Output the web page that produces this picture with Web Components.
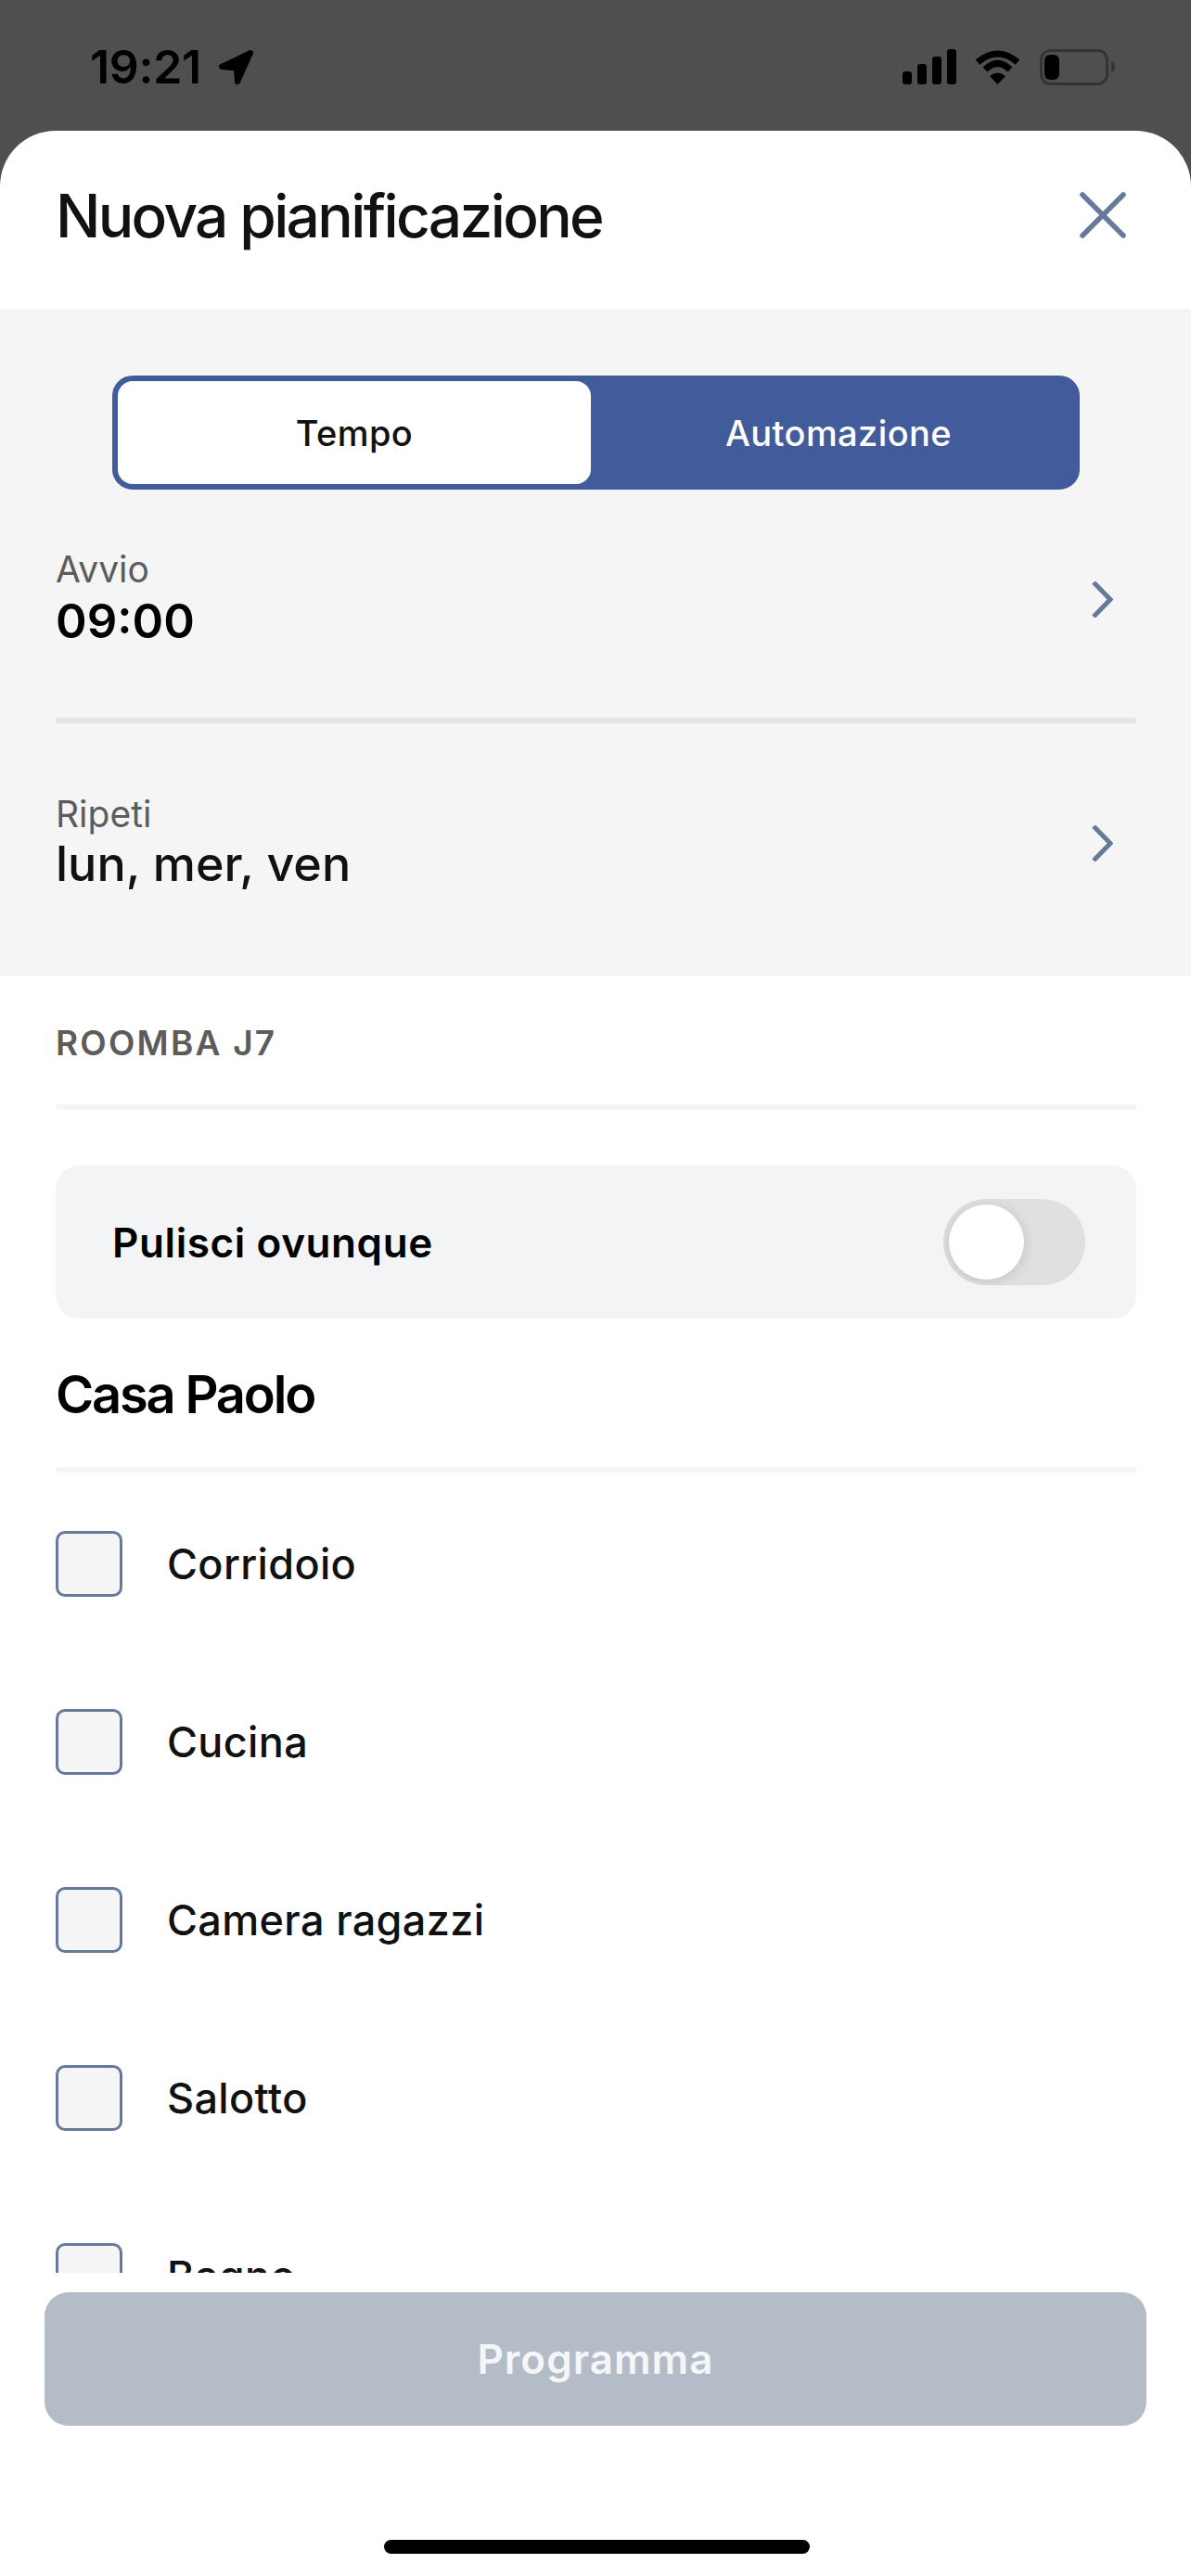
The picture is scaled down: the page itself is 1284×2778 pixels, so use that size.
<!DOCTYPE html>
<html lang="it">
<head>
<meta charset="utf-8">
<title>Nuova pianificazione</title>
<style>
	html, body {
		margin: 0;
		background: #4f4f50;
	}

	body {
		width: 1284px;
		height: 2778px;
		overflow: hidden;
		font-family: Inter, "Liberation Sans", sans-serif;
		color: #111111;
	}
</style>
</head>
<body>
	<app-status-bar time="19:21"></app-status-bar>
	<schedule-sheet>
		<sheet-header slot="header">Nuova pianificazione</sheet-header>

		<segmented-control slot="when" active="Tempo" other="Automazione"></segmented-control>
		<setting-row slot="when" label="Avvio" value="09:00" variant="time"></setting-row>
		<sheet-divider slot="when" tone="dark"></sheet-divider>
		<setting-row slot="when" label="Ripeti" value="lun, mer, ven" variant="days"></setting-row>

		<section-label slot="what">ROOMBA J7</section-label>
		<sheet-divider slot="what" style="margin-top: 46px"></sheet-divider>
		<toggle-card slot="what" style="margin-top: 60px">Pulisci ovunque</toggle-card>
		<map-title slot="what">Casa Paolo</map-title>
		<sheet-divider slot="what" style="margin-top: 46px"></sheet-divider>

		<room-row slot="rooms">Corridoio</room-row>
		<room-row slot="rooms">Cucina</room-row>
		<room-row slot="rooms">Camera ragazzi</room-row>
		<room-row slot="rooms">Salotto</room-row>
		<room-row slot="rooms">Bagno</room-row>

		<primary-button slot="footer" disabled>Programma</primary-button>
		<home-indicator slot="footer"></home-indicator>
	</schedule-sheet>

<script>
class AppStatusBar extends HTMLElement {
	constructor() {
		super();
		this.attachShadow({ mode: 'open' });
		this.shadowRoot.innerHTML = `
			<style>
				:host {
					display: flex;
					justify-content: space-between;
					box-sizing: border-box;
					height: 141px;
					padding: 53px 82px 0 97px;
					background: #4f4f50;
					color: #000000;
				}

				.left, .right {
					display: flex;
					align-items: flex-start;
				}

				.time {
					width: 120px;
					font-size: 50px;
					font-weight: 600;
					line-height: 39px;
					letter-spacing: -0.3px;
					white-space: nowrap;
				}

				svg {
					display: block;
				}
			</style>
			<div class="left">
				<span class="time"></span>
				<svg style="margin-left: 18px" width="39" height="39" viewBox="0 0 39 39" aria-hidden="true">
					<path d="M35 4 L4 19 L20 20.5 L21 35 Z" fill="#000" stroke="#000" stroke-width="6" stroke-linejoin="round"/>
				</svg>
			</div>
			<div class="right">
				<svg width="58" height="38" viewBox="0 0 58 38" aria-hidden="true">
					<rect x="0" y="24" width="10" height="14" rx="3"/>
					<rect x="16" y="16" width="10" height="22" rx="3"/>
					<rect x="32" y="8" width="10" height="30" rx="3"/>
					<rect x="48" y="0" width="10" height="38" rx="3"/>
				</svg>
				<svg style="margin: 1px 0 0 20px" width="49" height="37" viewBox="0 0 49 37" aria-hidden="true">
					<path d="M3 13 Q24.5 -5 46 13" fill="none" stroke="#000" stroke-width="7"/>
					<path d="M11 21 Q24.5 8 38 21" fill="none" stroke="#000" stroke-width="7"/>
					<path d="M16 28 Q24.5 21 33 28 L24.5 37 Z"/>
				</svg>
				<svg style="margin-left: 21px" width="81" height="39" viewBox="0 0 81 39" aria-hidden="true">
					<rect x="1.5" y="1.5" width="71" height="36" rx="10" fill="none" stroke="#343434" stroke-width="3"/>
					<rect x="5" y="6" width="16" height="27" rx="6"/>
					<path d="M77 13 Q81 15 81 19 Q81 23 77 25 Z" fill="#343434"/>
				</svg>
			</div>
		`;
		this.shadowRoot.querySelector('.time').textContent = this.getAttribute('time');
	}
}

class ScheduleSheet extends HTMLElement {
	constructor() {
		super();
		this.attachShadow({ mode: 'open' });
		this.shadowRoot.innerHTML = `
			<style>
				:host {
					display: block;
					height: 2637px;
					background: #ffffff;
					border-radius: 60px 60px 0 0;
					overflow: hidden;
				}

				.when {
					display: block;
					padding: 72px 59px 0 60px;
					height: 719px;
					box-sizing: border-box;
					background: #f5f5f5;
				}

				.what {
					padding: 0 59px 0 60px;
				}

				.rooms {
					height: 861px;
					margin-top: 2px;
					padding: 0 59px 0 60px;
					overflow: hidden;
				}
			</style>
			<slot name="header"></slot>
			<div class="when"><slot name="when"></slot></div>
			<div class="what"><slot name="what"></slot></div>
			<div class="rooms"><slot name="rooms"></slot></div>
			<slot name="footer"></slot>
		`;
	}
}

class SheetHeader extends HTMLElement {
	constructor() {
		super();
		this.attachShadow({ mode: 'open' });
		this.shadowRoot.innerHTML = `
			<style>
				:host {
					display: flex;
					align-items: center;
					justify-content: space-between;
					box-sizing: border-box;
					height: 192px;
					padding: 0 70px 10px 60px;
				}

				.title {
					font-size: 64px;
					font-weight: 500;
					letter-spacing: -2.65px;
					color: #111111;
				}

				svg {
					display: block;
				}
			</style>
			<span class="title"><slot></slot></span>
			<svg width="50" height="50" viewBox="0 0 50 50" aria-label="Chiudi">
				<path d="M3 3 L47 47 M47 3 L3 47" fill="none" stroke="#65799a" stroke-width="5.5" stroke-linecap="round"/>
			</svg>
		`;
	}
}

class SegmentedControl extends HTMLElement {
	constructor() {
		super();
		this.attachShadow({ mode: 'open' });
		this.shadowRoot.innerHTML = `
			<style>
				:host {
					display: grid;
					grid-template-columns: 510px 1fr;
					box-sizing: border-box;
					height: 123px;
					margin: 0 61px;
					border: 6px solid #425c9b;
					background: #425c9b;
					border-radius: 22px;
					font-size: 38px;
					font-weight: 500;
					letter-spacing: 0.4px;
				}

				div {
					display: flex;
					align-items: center;
					justify-content: center;
				}

				.active {
					background: #ffffff;
					border-radius: 16px;
					color: #111111;
				}

				.other {
					padding-left: 13px;
					color: #ffffff;
				}
			</style>
			<div class="active"></div>
			<div class="other"></div>
		`;
		this.shadowRoot.querySelector('.active').textContent = this.getAttribute('active');
		this.shadowRoot.querySelector('.other').textContent = this.getAttribute('other');
	}
}

class SettingRow extends HTMLElement {
	constructor() {
		super();
		this.attachShadow({ mode: 'open' });
		this.shadowRoot.innerHTML = `
			<style>
				:host {
					display: flex;
					align-items: center;
					justify-content: space-between;
					box-sizing: border-box;
					padding: 62px 25px 72px 0;
				}

				:host([variant="days"]) {
					padding-top: 74px;
					padding-bottom: 88px;
				}

				.label {
					font-size: 39px;
					line-height: 48px;
					color: #5c5c5c;
				}

				.value {
					font-size: 51px;
					line-height: 64px;
					font-weight: 600;
					color: #000000;
				}

				:host([variant="days"]) .value {
					margin-top: -2px;
					font-size: 52px;
					font-weight: 500;
					color: #111111;
				}

				svg {
					display: block;
				}
			</style>
			<div>
				<div class="label"></div>
				<div class="value"></div>
			</div>
			<svg width="23" height="39" viewBox="0 0 23 39" aria-hidden="true">
				<path d="M2 1 L20 19.5 L2 38" fill="none" stroke="#65799a" stroke-width="5"/>
			</svg>
		`;
		this.shadowRoot.querySelector('.label').textContent = this.getAttribute('label');
		this.shadowRoot.querySelector('.value').textContent = this.getAttribute('value');
	}
}

class SheetDivider extends HTMLElement {
	constructor() {
		super();
		this.attachShadow({ mode: 'open' });
		this.shadowRoot.innerHTML = `
			<style>
				:host {
					display: block;
					height: 6px;
					background: #f5f5f5;
				}

				:host([tone="dark"]) {
					background: #e5e5e5;
				}
			</style>
		`;
	}
}

class SectionLabel extends HTMLElement {
	constructor() {
		super();
		this.attachShadow({ mode: 'open' });
		this.shadowRoot.innerHTML = `
			<style>
				:host {
					display: block;
					padding-top: 53px;
					font-size: 37px;
					line-height: 40px;
					font-weight: 600;
					letter-spacing: 2.2px;
					color: #5c5c5c;
				}
			</style>
			<slot></slot>
		`;
	}
}

class ToggleCard extends HTMLElement {
	constructor() {
		super();
		this.attachShadow({ mode: 'open' });
		this.shadowRoot.innerHTML = `
			<style>
				:host {
					display: flex;
					align-items: center;
					justify-content: space-between;
					box-sizing: border-box;
					height: 165px;
					padding: 0 55px 0 61px;
					background: #f3f4f6;
					border-radius: 25px;
					font-size: 44px;
					font-weight: 600;
					letter-spacing: 0.6px;
					color: #000000;
				}

				.track {
					position: relative;
					width: 153px;
					height: 93px;
					border-radius: 47px;
					background: #dfe0e2;
					overflow: hidden;
				}

				.knob {
					position: absolute;
					top: 6px;
					left: 6px;
					width: 81px;
					height: 81px;
					border-radius: 50%;
					background: #ffffff;
					box-shadow: 0 2px 14px rgba(0, 0, 0, 0.14);
				}
			</style>
			<span><slot></slot></span>
			<div class="track"><div class="knob"></div></div>
		`;
	}
}

class MapTitle extends HTMLElement {
	constructor() {
		super();
		this.attachShadow({ mode: 'open' });
		this.shadowRoot.innerHTML = `
			<style>
				:host {
					display: block;
					margin-top: 50px;
					font-size: 56px;
					line-height: 64px;
					font-weight: 600;
					letter-spacing: -2.2px;
					color: #000000;
				}
			</style>
			<slot></slot>
		`;
	}
}

class RoomRow extends HTMLElement {
	constructor() {
		super();
		this.attachShadow({ mode: 'open' });
		this.shadowRoot.innerHTML = `
			<style>
				:host {
					display: flex;
					align-items: center;
					gap: 48px;
					height: 192px;
					font-size: 45px;
					font-weight: 550;
					letter-spacing: 0.35px;
					color: #111111;
				}

				.box {
					box-sizing: border-box;
					width: 72px;
					height: 71px;
					border: 3px solid #65799a;
					border-radius: 10px;
					background: #f5f5f5;
				}
			</style>
			<div class="box"></div>
			<span><slot></slot></span>
		`;
	}
}

class PrimaryButton extends HTMLElement {
	constructor() {
		super();
		this.attachShadow({ mode: 'open' });
		this.shadowRoot.innerHTML = `
			<style>
				:host {
					display: flex;
					align-items: center;
					justify-content: center;
					height: 144px;
					margin: 21px 48px 0;
					border-radius: 26px;
					background: #425c9b;
					font-size: 44px;
					font-weight: 600;
					letter-spacing: 1px;
					color: #ffffff;
				}

				:host([disabled]) {
					background: #b4bcc8;
					color: #f5f6f8;
				}
			</style>
			<slot></slot>
		`;
	}
}

class HomeIndicator extends HTMLElement {
	constructor() {
		super();
		this.attachShadow({ mode: 'open' });
		this.shadowRoot.innerHTML = `
			<style>
				:host {
					display: block;
					width: 459px;
					height: 15px;
					margin: 123px 0 0 414px;
					border-radius: 8px;
					background: #000000;
				}
			</style>
		`;
	}
}

customElements.define('app-status-bar', AppStatusBar);
customElements.define('schedule-sheet', ScheduleSheet);
customElements.define('sheet-header', SheetHeader);
customElements.define('segmented-control', SegmentedControl);
customElements.define('setting-row', SettingRow);
customElements.define('sheet-divider', SheetDivider);
customElements.define('section-label', SectionLabel);
customElements.define('toggle-card', ToggleCard);
customElements.define('map-title', MapTitle);
customElements.define('room-row', RoomRow);
customElements.define('primary-button', PrimaryButton);
customElements.define('home-indicator', HomeIndicator);
</script>
</body>
</html>
